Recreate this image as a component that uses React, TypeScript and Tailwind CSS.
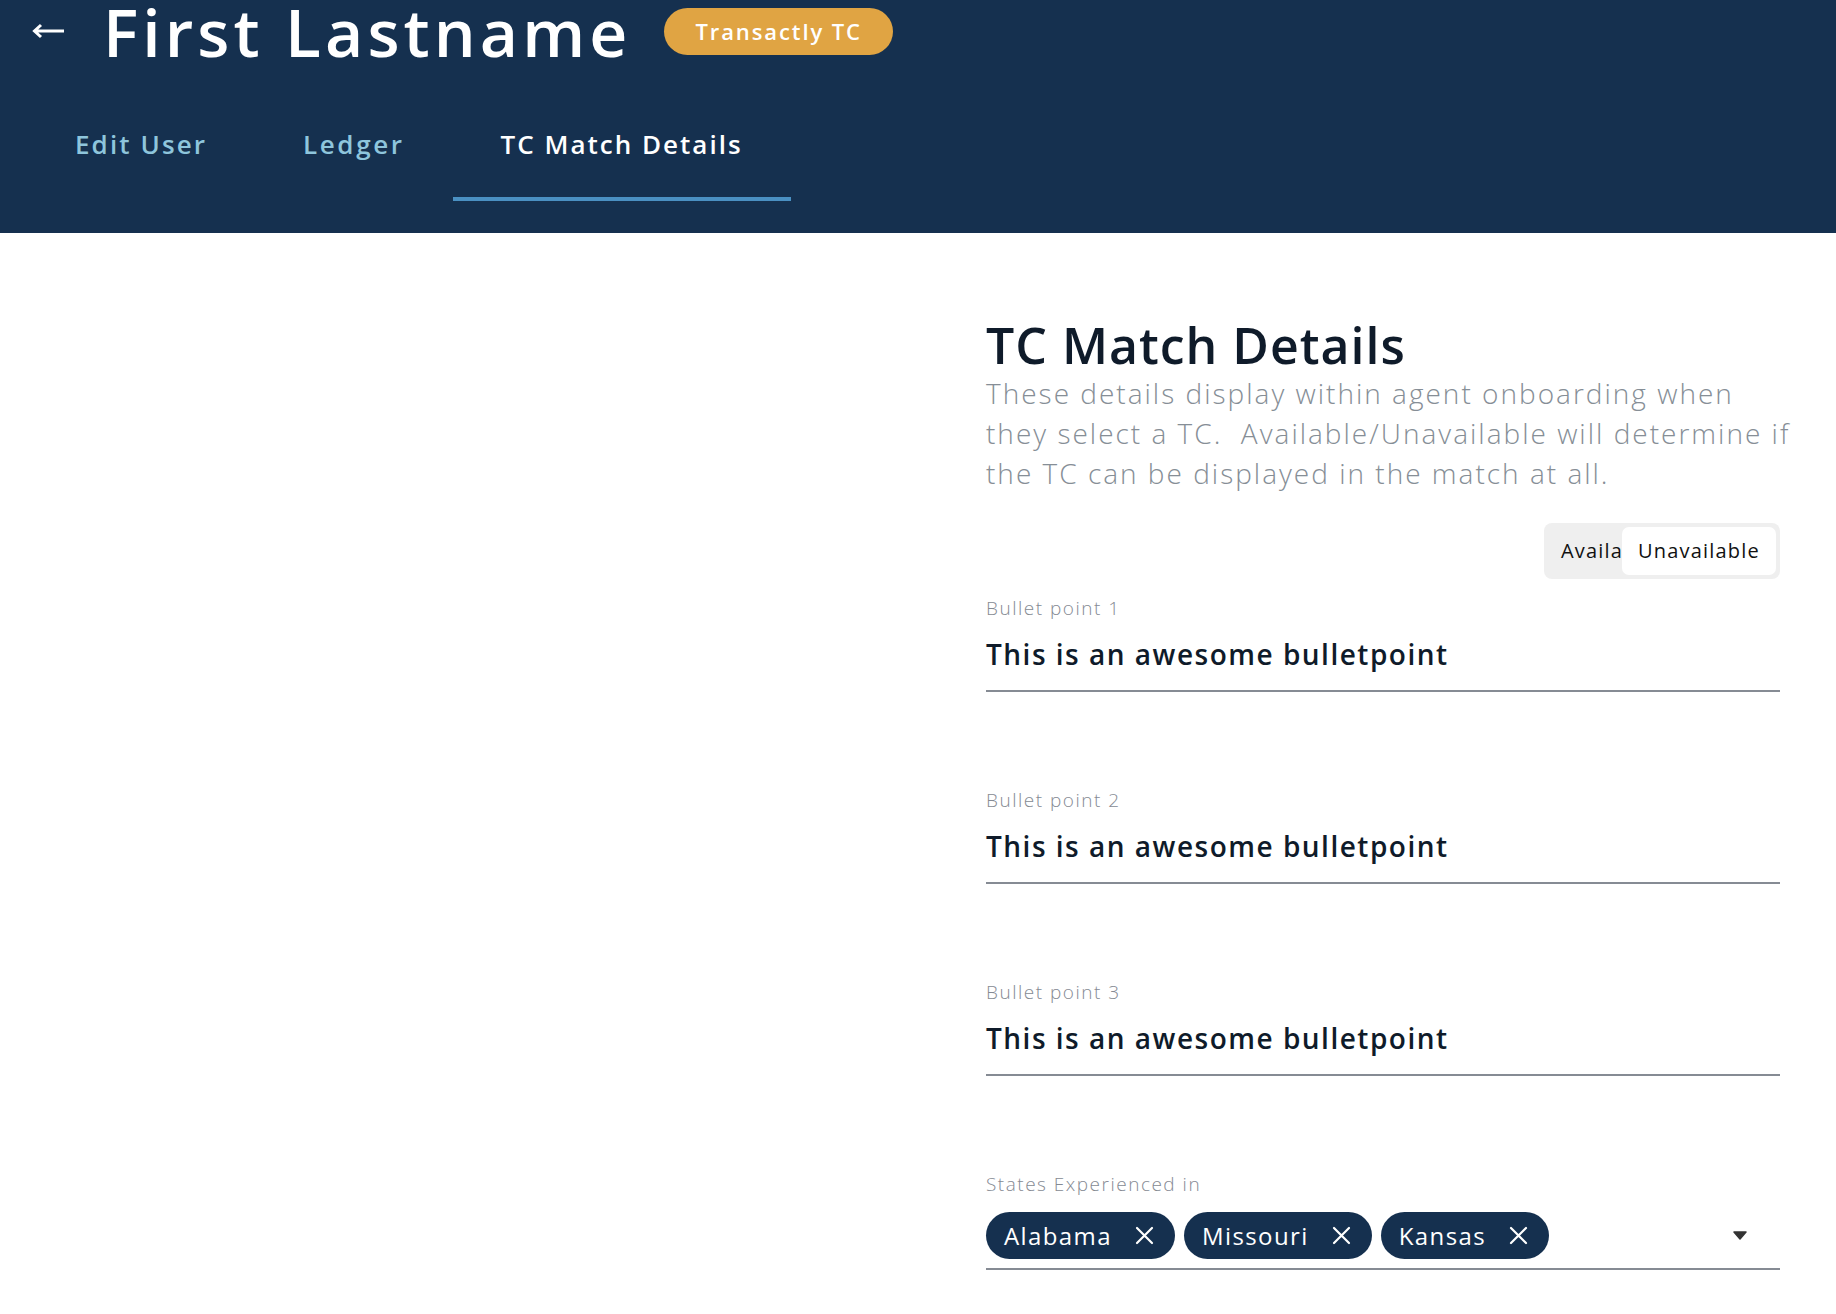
import React from "react";

const font = { fontFamily: '"Open Sans", "Noto Sans", sans-serif' };

function Field({ label, value }: { label: string; value: string }) {
  return (
    <div className="flex flex-col">
      <div className="text-[19px] font-light leading-[24px] tracking-[1.5px] text-[#858a93]">{label}</div>
      <div className="mt-[16px] text-[28px] font-semibold leading-[36px] tracking-[1.5px] text-[#0f1b2a]">{value}</div>
      <div className="mt-[18px] h-[2px] bg-[#868b94]" />
    </div>
  );
}

function Chip({ label }: { label: string }) {
  return (
    <div className="flex h-[47px] items-center rounded-full bg-[#15304f] pl-[18px] pr-[21px] text-white">
      <span className="text-[24px] font-medium leading-none tracking-[1.4px]">{label}</span>
      <svg className="ml-[23px]" width="19" height="19" viewBox="0 0 19 19" fill="none">
        <path d="M2 2L17 17M17 2L2 17" stroke="white" strokeWidth="2.2" strokeLinecap="round" />
      </svg>
    </div>
  );
}

export default function App() {
  return (
    <div className="min-h-[1314px] bg-white" style={font}>
      <header className="h-[233px] bg-[#15304f]">
        <div className="flex h-[62px] items-center">
          <svg className="ml-[32px]" width="33" height="16" viewBox="0 0 33 16" fill="none">
            <path d="M32 8H3M9 2L2.5 8L9 14" stroke="white" strokeWidth="3" />
          </svg>
          <h1 className="ml-[38px] whitespace-nowrap text-[66px] font-semibold leading-none tracking-[4.1px] text-white">First Lastname</h1>
          <div className="ml-[33px] flex h-[47px] items-center whitespace-nowrap rounded-full bg-[#e0a443] px-[31px] text-[22px] font-semibold tracking-[1.9px] text-white">
            Transactly TC
          </div>
        </div>
        <nav className="ml-[27px] mt-[29px] flex">
          <div className="flex h-[110px] items-center border-b-4 border-transparent px-[48px] text-[26px] font-semibold tracking-[2.1px] text-[#8ec5dc]">
            Edit User
          </div>
          <div className="flex h-[110px] items-center border-b-4 border-transparent px-[48px] text-[26px] font-semibold tracking-[2.6px] text-[#8ec5dc]">
            Ledger
          </div>
          <div className="flex h-[110px] items-center border-b-4 border-[#4a90c2] px-[48px] text-[26px] font-semibold tracking-[2px] text-white">
            TC Match Details
          </div>
        </nav>
      </header>
      <main className="flex">
        <div className="flex-1" />
        <section className="mr-[56px] w-[794px] pt-[84px]">
          <h2 className="text-[50px] font-semibold leading-[56px] tracking-[1px] text-[#0f1b2a]">TC Match Details</h2>
          <p className="whitespace-nowrap text-[28px] font-light leading-[40px] tracking-[2px] text-[#868e96]">
            These details display within agent onboarding when
            <br />
            they select a TC.&nbsp; Available/Unavailable will determine if
            <br />
            the TC can be displayed in the match at all.
          </p>
          <div className="mt-[30px] flex justify-end">
            <div className="flex h-[56px] w-[236px] items-center overflow-hidden rounded-[8px] bg-[#efefef] p-[4px]">
              <div className="w-[74px] shrink-0 overflow-hidden whitespace-nowrap pl-[13px] text-[20px] font-medium tracking-[1.2px] text-[#111]">Available</div>
              <div className="flex h-full flex-1 items-center justify-center rounded-[7px] bg-white text-[20px] font-medium tracking-[1.2px] text-[#111]">
                Unavailable
              </div>
            </div>
          </div>
          <div className="mt-[17px] flex flex-col gap-[96px]">
            <Field label="Bullet point 1" value="This is an awesome bulletpoint" />
            <Field label="Bullet point 2" value="This is an awesome bulletpoint" />
            <Field label="Bullet point 3" value="This is an awesome bulletpoint" />
            <div className="flex flex-col">
              <div className="text-[19px] font-light leading-[24px] tracking-[1.5px] text-[#858a93]">States Experienced in</div>
              <div className="mt-[16px] flex items-center gap-[9px]">
                <Chip label="Alabama" />
                <Chip label="Missouri" />
                <Chip label="Kansas" />
                <div className="flex-1" />
                <svg className="mr-[33px]" width="14" height="9" viewBox="0 0 14 9">
                  <path d="M1 1H13L7 8Z" fill="#333" stroke="#333" strokeLinejoin="round" strokeWidth="1.5" />
                </svg>
              </div>
              <div className="mt-[9px] h-[2px] bg-[#868b94]" />
            </div>
          </div>
        </section>
      </main>
    </div>
  );
}
